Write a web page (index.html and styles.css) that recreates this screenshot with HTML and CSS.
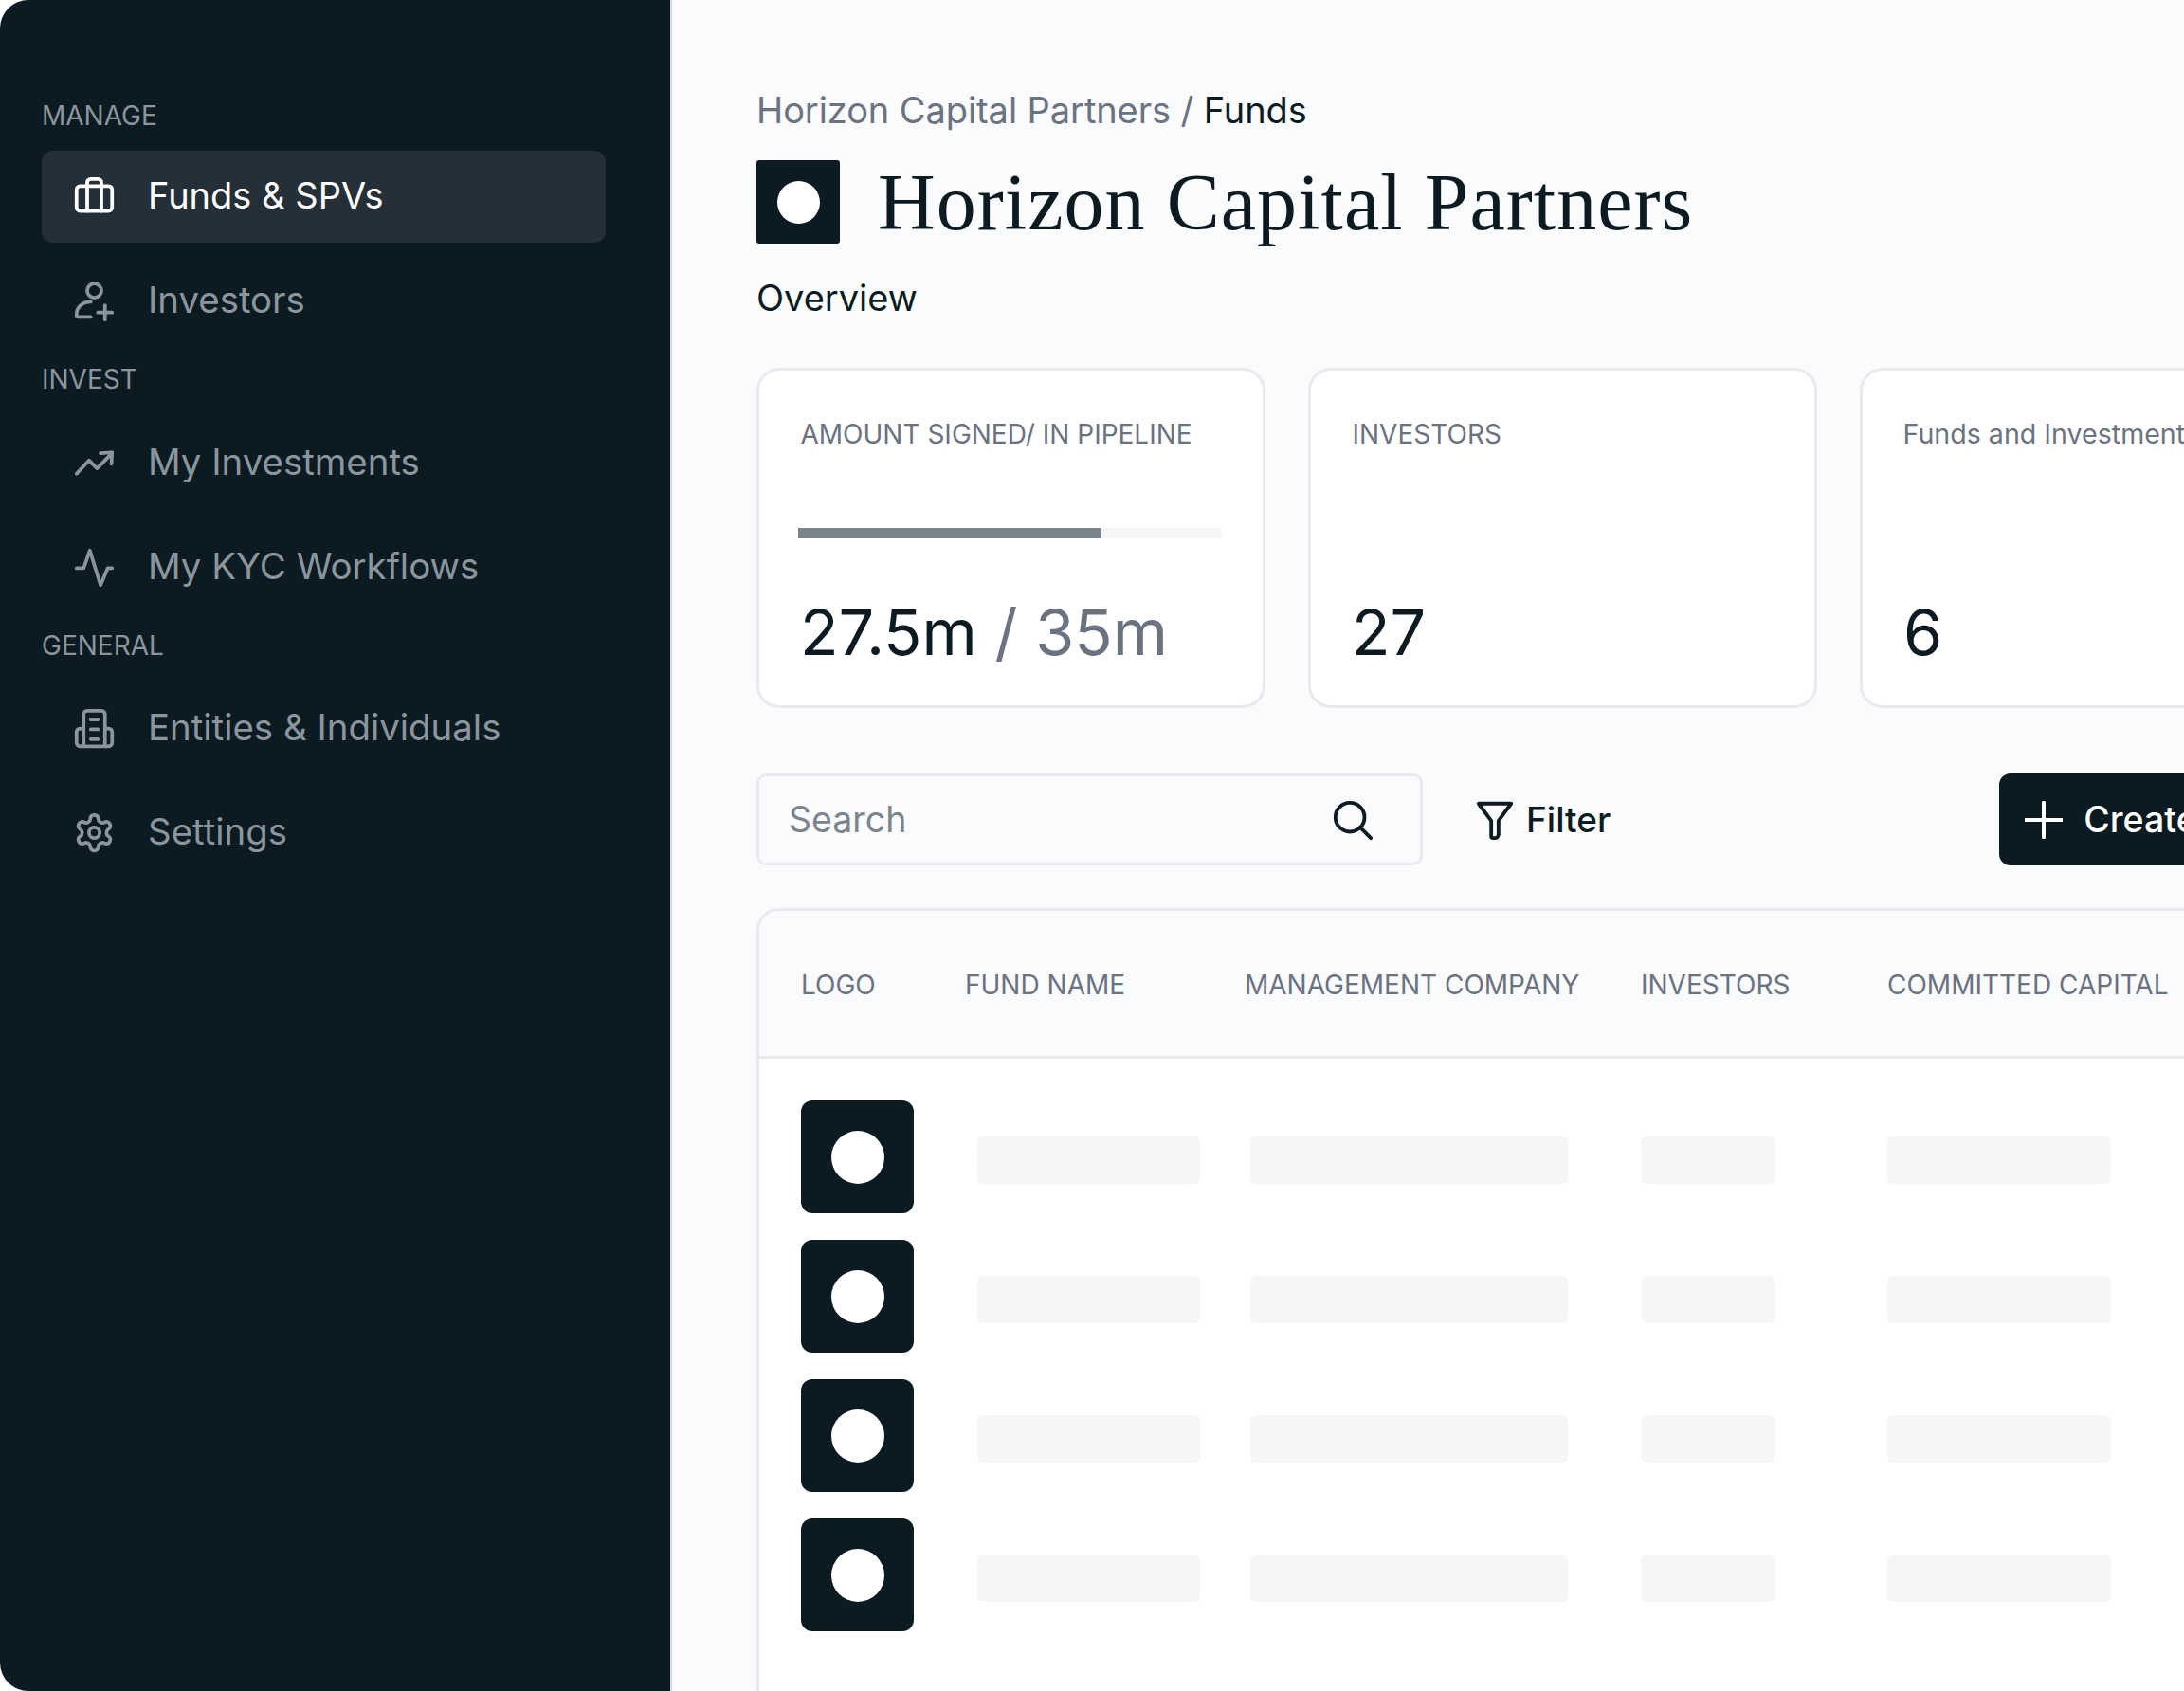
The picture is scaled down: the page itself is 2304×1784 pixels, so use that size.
FILE: index.html
```html
<!DOCTYPE html>
<html lang="en">
<head>
    <meta charset="UTF-8">
    <meta name="viewport" content="width=device-width, initial-scale=1.0">
    <title>Horizon Capital Partners</title>
    <link rel="stylesheet" href="styles.css">
</head>
<body>
    <div class="app">
        <aside class="sidebar">
            <div class="nav-label">MANAGE</div>
            <div class="nav-list">
                <a class="nav-item active">
                    <svg class="nav-icon" viewBox="0 0 24 24"><rect x="2" y="6" width="20" height="14" rx="2"/><path d="M16 20V4a2 2 0 0 0-2-2h-4a2 2 0 0 0-2 2v16"/></svg>
                    <span>Funds &amp; SPVs</span>
                </a>
                <a class="nav-item">
                    <svg class="nav-icon" viewBox="0 0 24 24"><circle cx="12" cy="6.2" r="4"/><path d="M10 12.5C5.5 12.5 2 15.5 2 19.5v.5a1 1 0 0 0 1 1h7"/><path d="M18 14.5v8"/><path d="M14 18.5h8"/></svg>
                    <span>Investors</span>
                </a>
            </div>
            <div class="nav-label">INVEST</div>
            <div class="nav-list">
                <a class="nav-item">
                    <svg class="nav-icon" viewBox="0 0 24 24"><polyline points="2 18 9 10.5 13.5 15 22 6.5"/><polyline points="15.5 6.5 22 6 21.6 12.5"/></svg>
                    <span>My Investments</span>
                </a>
                <a class="nav-item">
                    <svg class="nav-icon" viewBox="0 0 24 24"><polyline points="2 12.5 6 12.5 9.5 2.5 15.5 22 19.5 12.5 22 12.5"/></svg>
                    <span>My KYC Workflows</span>
                </a>
            </div>
            <div class="nav-label">GENERAL</div>
            <div class="nav-list">
                <a class="nav-item">
                    <svg class="nav-icon" viewBox="0 0 24 24"><path d="M6 22V4a2 2 0 0 1 2-2h8a2 2 0 0 1 2 2v18"/><path d="M6 12H4a2 2 0 0 0-2 2v6a2 2 0 0 0 2 2h16a2 2 0 0 0 2-2v-6a2 2 0 0 0-2-2h-2"/><path d="M10 7h4"/><path d="M10 12.5h4"/><path d="M10 18h4"/></svg>
                    <span>Entities &amp; Individuals</span>
                </a>
                <a class="nav-item">
                    <svg class="nav-icon" viewBox="0 0 24 24"><path d="M12.22 2h-.44a2 2 0 0 0-2 2v.18a2 2 0 0 1-1 1.73l-.43.25a2 2 0 0 1-2 0l-.15-.08a2 2 0 0 0-2.73.73l-.22.38a2 2 0 0 0 .73 2.73l.15.1a2 2 0 0 1 1 1.72v.51a2 2 0 0 1-1 1.74l-.15.09a2 2 0 0 0-.73 2.73l.22.38a2 2 0 0 0 2.73.73l.15-.08a2 2 0 0 1 2 0l.43.25a2 2 0 0 1 1 1.73V20a2 2 0 0 0 2 2h.44a2 2 0 0 0 2-2v-.18a2 2 0 0 1 1-1.73l.43-.25a2 2 0 0 1 2 0l.15.08a2 2 0 0 0 2.73-.73l.22-.39a2 2 0 0 0-.73-2.73l-.15-.08a2 2 0 0 1-1-1.74v-.5a2 2 0 0 1 1-1.74l.15-.09a2 2 0 0 0 .73-2.73l-.22-.38a2 2 0 0 0-2.73-.73l-.15.08a2 2 0 0 1-2 0l-.43-.25a2 2 0 0 1-1-1.73V4a2 2 0 0 0-2-2z"/><circle cx="12" cy="12" r="3"/></svg>
                    <span>Settings</span>
                </a>
            </div>
        </aside>

        <main class="main">
            <div class="breadcrumb">Horizon Capital Partners / <span class="breadcrumb-current">Funds</span></div>
            <div class="title-row">
                <div class="logo logo-title"><span class="logo-dot"></span></div>
                <h1 class="title">Horizon Capital Partners</h1>
            </div>
            <div class="subtitle">Overview</div>

            <section class="cards">
                <div class="card">
                    <div class="card-label">AMOUNT SIGNED/ IN PIPELINE</div>
                    <div class="progress"><div class="progress-fill" style="width: 71.5%"></div></div>
                    <div class="card-value">27.5m <span class="muted">/ 35m</span></div>
                </div>
                <div class="card">
                    <div class="card-label">INVESTORS</div>
                    <div class="progress progress-empty"></div>
                    <div class="card-value">27</div>
                </div>
                <div class="card">
                    <div class="card-label card-label-plain">Funds and Investments</div>
                    <div class="progress progress-empty"></div>
                    <div class="card-value">6</div>
                </div>
            </section>

            <section class="toolbar">
                <div class="search">
                    <span class="search-text">Search</span>
                    <svg class="search-icon" viewBox="0 0 24 24"><circle cx="10.5" cy="10.5" r="8"/><path d="m22 22-5.9-5.9"/></svg>
                </div>
                <div class="filter">
                    <svg class="filter-icon" viewBox="0 0 24 24"><path d="M3 3h18l-7 9.5V20a2 2 0 0 1-2 2h-1a1 1 0 0 1-1-1v-8.5z"/></svg>
                    <span>Filter</span>
                </div>
                <button class="create">
                    <svg class="create-icon" viewBox="0 0 24 24"><path d="M12 1v22"/><path d="M0 12h24"/></svg>
                    <span>Create Fund</span>
                </button>
            </section>

            <section class="table">
                <div class="table-head">
                    <div>LOGO</div>
                    <div>FUND NAME</div>
                    <div>MANAGEMENT COMPANY</div>
                    <div>INVESTORS</div>
                    <div>COMMITTED CAPITAL</div>
                </div>
                <div class="table-body">
                    <div class="table-row">
                        <div class="logo logo-row"><span class="logo-dot"></span></div>
                        <div class="skeleton"></div>
                        <div class="skeleton"></div>
                        <div class="skeleton"></div>
                        <div class="skeleton"></div>
                    </div>
                    <div class="table-row">
                        <div class="logo logo-row"><span class="logo-dot"></span></div>
                        <div class="skeleton"></div>
                        <div class="skeleton"></div>
                        <div class="skeleton"></div>
                        <div class="skeleton"></div>
                    </div>
                    <div class="table-row">
                        <div class="logo logo-row"><span class="logo-dot"></span></div>
                        <div class="skeleton"></div>
                        <div class="skeleton"></div>
                        <div class="skeleton"></div>
                        <div class="skeleton"></div>
                    </div>
                    <div class="table-row">
                        <div class="logo logo-row"><span class="logo-dot"></span></div>
                        <div class="skeleton"></div>
                        <div class="skeleton"></div>
                        <div class="skeleton"></div>
                        <div class="skeleton"></div>
                    </div>
                </div>
            </section>
        </main>
    </div>
</body>
</html>
```

FILE: styles.css
```css
* {
    box-sizing: border-box;
}

html, body {
    margin: 0;
    height: 100%;
    background-color: #fff;
}

body {
    font-family: Inter, 'Noto Sans', sans-serif;
    color: #0c1b21;
    overflow: hidden;
}

.app {
    display: flex;
    width: 2304px;
    height: 1784px;
    overflow: hidden;
    background-color: #f9fbfd;
    border-radius: 30px 0 0 30px;
}

/* sidebar */
.sidebar {
    flex: none;
    width: 709px;
    padding: 102px 0 0 44px;
    background-color: #0c1b21;
    border-right: 2px solid #d5d9dd;
}

.nav-label {
    height: 40px;
    line-height: 40px;
    font-size: 28px;
    color: #8a959d;
    margin-bottom: 19.5px;
}

.nav-label:first-child {
    margin-bottom: 17px;
}

.nav-list {
    display: flex;
    flex-direction: column;
    gap: 13px;
    margin-bottom: 14px;
    width: 595px;
}

.nav-item {
    display: flex;
    align-items: center;
    gap: 34px;
    height: 97px;
    padding-left: 33px;
    border-radius: 12px;
    font-size: 38.4px;
    color: #8a959d;
}

.nav-item span {
    margin-bottom: 3px;
}

.nav-item.active {
    background-color: #252f37;
    color: #fff;
    font-size: 38px;
}

.nav-icon {
    flex: none;
    width: 45px;
    height: 45px;
    fill: none;
    stroke: currentColor;
    stroke-width: 2;
    stroke-linecap: round;
    stroke-linejoin: round;
}

/* main */
.main {
    flex: 1;
    min-width: 0;
    padding: 92px 0 0 89px;
}

.breadcrumb {
    height: 48px;
    line-height: 48px;
    font-size: 38px;
    letter-spacing: -0.08px;
    color: #6b7280;
}

.breadcrumb-current {
    color: #0c1b21;
}

.title-row {
    display: flex;
    align-items: center;
    gap: 40px;
    margin-top: 29px;
}

.logo {
    flex: none;
    display: flex;
    align-items: center;
    justify-content: center;
    background-color: #0c1b21;
}

.logo-title {
    width: 88px;
    height: 88px;
    border-radius: 3px;
}

.logo-title .logo-dot {
    width: 45px;
    height: 45px;
}

.logo-dot {
    display: block;
    border-radius: 50%;
    background-color: #fff;
}

.title {
    margin: 0;
    padding-top: 2px;
    font-family: 'Liberation Serif', serif;
    font-weight: 400;
    font-size: 84px;
    letter-spacing: 1.05px;
    line-height: 86px;
}

.subtitle {
    height: 44px;
    line-height: 44px;
    font-size: 38px;
    margin-top: 35px;
}

/* cards */
.cards {
    display: flex;
    gap: 45px;
    margin-top: 52px;
}

.card {
    flex: none;
    width: 537px;
    height: 359px;
    padding: 47px 43px 0 41px;
    background-color: #fff;
    border: 3px solid #e8eaed;
    border-radius: 24px;
}

.card-label {
    height: 40px;
    line-height: 40px;
    font-size: 28px;
    color: #6b7280;
    margin-left: 2.5px;
    white-space: nowrap;
}

.card-label-plain {
    font-size: 28.6px;
    margin-left: 1.5px;
}

.progress {
    height: 11px;
    margin-top: 79px;
    background-color: #f5f5f5;
}

.progress-empty {
    background-color: transparent;
}

.progress-fill {
    height: 100%;
    background-color: #78838c;
}

.card-value {
    height: 80px;
    line-height: 80px;
    font-size: 66.5px;
    margin: 59px 0 0 2px;
    white-space: nowrap;
}

.muted {
    color: #6b7280;
}

/* toolbar */
.toolbar {
    display: flex;
    align-items: center;
    height: 97px;
    margin-top: 69px;
}

.search {
    flex: none;
    display: flex;
    align-items: center;
    justify-content: space-between;
    width: 703px;
    height: 97px;
    padding: 0 48px 0 31px;
    border: 3px solid #e8eaed;
    border-radius: 10px;
}

.search-text {
    font-size: 37.5px;
    color: #7a858e;
}

.search-icon {
    width: 46px;
    height: 46px;
    fill: none;
    stroke: #0c1b21;
    stroke-width: 2;
    stroke-linecap: round;
}

.filter {
    flex: none;
    display: flex;
    align-items: center;
    gap: 10px;
    margin-left: 53px;
    font-size: 37px;
    font-weight: 500;
}

.filter-icon {
    width: 46px;
    height: 46px;
    fill: none;
    stroke: #0c1b21;
    stroke-width: 2;
    stroke-linejoin: round;
}

.create {
    flex: none;
    display: flex;
    align-items: center;
    gap: 22px;
    height: 97px;
    margin-left: 410px;
    padding: 0 30px 0 27px;
    border: none;
    border-radius: 12px;
    background-color: #0c1b21;
    color: #fff;
    font-family: inherit;
    font-size: 37.5px;
    font-weight: 500;
    white-space: nowrap;
}

.create-icon {
    width: 40px;
    height: 40px;
    fill: none;
    stroke: #fff;
    stroke-width: 2.4;
    stroke-linecap: round;
}

/* table */
.table {
    width: 1700px;
    margin-top: 45px;
    height: 900px;
    background-color: #fff;
    border: 3px solid #e8eaed;
    border-radius: 24px 0 0 0;
    overflow: hidden;
}

.table-head {
    display: grid;
    grid-template-columns: 173px 295px 418px 260px 1fr;
    align-items: center;
    height: 156px;
    padding: 3px 0 0 44px;
    background-color: #f9fbfd;
    border-bottom: 3px solid #e8eaed;
    font-size: 28px;
    color: #6b7280;
    white-space: nowrap;
}

.table-body {
    display: flex;
    flex-direction: column;
    gap: 28px;
    padding: 44px 0 0 44px;
}

.table-row {
    display: grid;
    grid-template-columns: 186px 288px 412px 260px 236px;
    align-items: center;
    height: 119px;
}

.logo-row {
    width: 119px;
    height: 119px;
    border-radius: 12px;
}

.logo-row .logo-dot {
    width: 56px;
    height: 56px;
}

.skeleton {
    height: 50px;
    margin-top: 6px;
    background-color: #f6f6f6;
    border-radius: 6px;
}

.table-row .skeleton:nth-child(2) {
    width: 235px;
}

.table-row .skeleton:nth-child(3) {
    width: 335px;
}

.table-row .skeleton:nth-child(4) {
    width: 142px;
}

.table-row .skeleton:nth-child(5) {
    width: 236px;
}
```
